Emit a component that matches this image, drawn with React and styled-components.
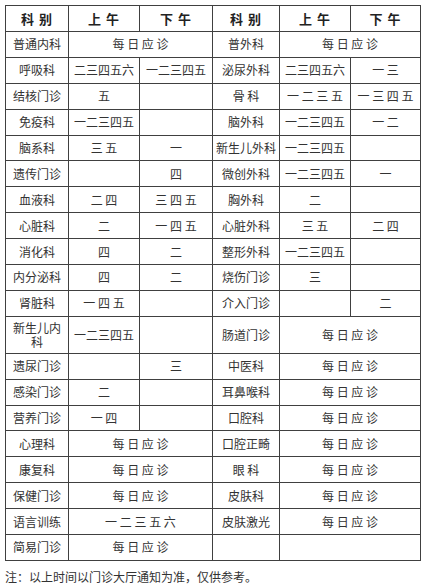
import React from "react";
import styled, { createGlobalStyle } from "styled-components";

const Global = createGlobalStyle`
  html, body { margin: 0; padding: 0; background: #ffffff; }
  body { font-family: "Noto Sans CJK SC", "Noto Sans", sans-serif; color: #333; }
`;

const Page = styled.div`
  padding: 5px 0 0 5px;
  width: 425px;
  box-sizing: border-box;
`;

const Table = styled.table`
  border-collapse: collapse;
  table-layout: fixed;
  width: 415px;
  font-size: 12px;
  color: #333;
`;

const Row = styled.tr`
  height: ${(p) => (p.$head ? "26px" : "25.9px")};
`;

const Cell = styled.td`
  border: 1px solid #404040;
  padding: 4px 2px;
  line-height: 14px;
  text-align: center;
  vertical-align: middle;
  white-space: pre-wrap;
  word-break: break-all;
`;

const Head = styled.th`
  border: 1px solid #404040;
  padding: 4px 2px;
  line-height: 14px;
  text-align: center;
  font-size: 13px;
  font-weight: 700;
  color: #222;
  letter-spacing: 1px;
  white-space: pre;
`;

const Note = styled.p`
  margin: 8px 0 0 0;
  font-size: 12px;
  line-height: 16px;
  color: #333;
`;

const D = "每 日 应 诊";

// each half: [name, am, pm] or [name, span-text]
const left = [
  ["普通内科", D],
  ["呼吸科", "二三四五六", "一二三四五"],
  ["结核门诊", "五", ""],
  ["免疫科", "一二三四五", ""],
  ["脑系科", "三 五", "一"],
  ["遗传门诊", "", "四"],
  ["血液科", "二 四", "三 四 五"],
  ["心脏科", "二", "一 四 五"],
  ["消化科", "四", "二"],
  ["内分泌科", "四", "二"],
  ["肾脏科", "一 四 五", ""],
  ["新生儿内科", "一二三四五", ""],
  ["遗尿门诊", "", "三"],
  ["感染门诊", "二", ""],
  ["营养门诊", "一 四", ""],
  ["心理科", D],
  ["康复科", D],
  ["保健门诊", D],
  ["语言训练", "一 二 三 五 六"],
  ["简易门诊", D],
];

const right = [
  ["普外科", D],
  ["泌尿外科", "二三四五六", "一 三"],
  ["骨 科", "一 二 三 五", "一 三 四 五"],
  ["脑外科", "一二三四五", "一 二"],
  ["新生儿外科", "一二三四五", ""],
  ["微创外科", "一二三四五", "一"],
  ["胸外科", "二", ""],
  ["心脏外科", "三 五", "二 四"],
  ["整形外科", "一二三四五", ""],
  ["烧伤门诊", "三", ""],
  ["介入门诊", "", "二"],
  ["肠道门诊", D],
  ["中医科", D],
  ["耳鼻喉科", D],
  ["口腔科", D],
  ["口腔正畸", D],
  ["眼 科", D],
  ["皮肤科", D],
  ["皮肤激光", D],
  ["", ""],
];

const Half = ({ data, side }) => {
  const [name, ...rest] = data;
  const cells = [<Cell key={side + "n"}>{name}</Cell>];
  if (rest.length === 1) {
    cells.push(
      <Cell key={side + "s"} colSpan={2}>
        {rest[0]}
      </Cell>
    );
  } else {
    cells.push(<Cell key={side + "a"}>{rest[0]}</Cell>);
    cells.push(<Cell key={side + "p"}>{rest[1]}</Cell>);
  }
  return cells;
};

export default function App() {
  return (
    <Page>
      <Global />
      <Table>
        <colgroup>
          <col style={{ width: 63 }} />
          <col style={{ width: 71 }} />
          <col style={{ width: 73 }} />
          <col style={{ width: 67 }} />
          <col style={{ width: 71 }} />
          <col style={{ width: 70 }} />
        </colgroup>
        <thead>
          <Row $head>
            <Head>科 别</Head>
            <Head>上 午</Head>
            <Head>下 午</Head>
            <Head>科 别</Head>
            <Head>上 午</Head>
            <Head>下 午</Head>
          </Row>
        </thead>
        <tbody>
          {left.map((l, i) => (
            <Row key={i}>
              <Half data={l} side="l" />
              <Half data={right[i]} side="r" />
            </Row>
          ))}
        </tbody>
      </Table>
      <Note>注：以上时间以门诊大厅通知为准，仅供参考。</Note>
    </Page>
  );
}
